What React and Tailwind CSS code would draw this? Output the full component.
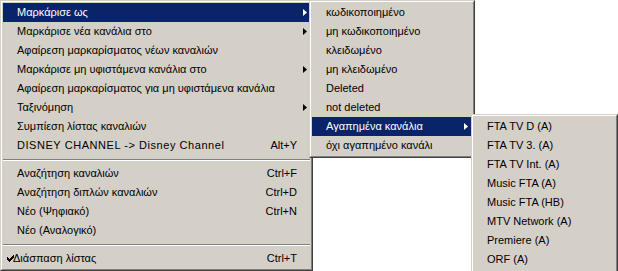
import React from "react";

const FONT = { fontFamily: '"Liberation Sans", Arial, sans-serif' };

function Arrow({ white }) {
  return (
    <svg width="4" height="7" viewBox="0 0 4 7" className="shrink-0">
      <polygon points="0,0 4,3.5 0,7" fill={white ? "#ffffff" : "#000000"} />
    </svg>
  );
}

function Check() {
  return (
    <svg width="7" height="7" viewBox="0 0 7 7" className="shrink-0" shapeRendering="crispEdges">
      <path
        d="M6 0h1v3h-1v1h-1v1h-1v1h-1v1h-1v-1h-1v-1h-1v-3h1v1h1v1h1v-1h1v-1h1z"
        fill="#000"
      />
    </svg>
  );
}

function Item({ t, sc, arrow, hl, check, wide, pl = "pl-[14px]", pr = "pr-[3px]" }) {
  return (
    <div
      className={`h-[19px] flex items-center ${pl} ${pr} whitespace-nowrap ${
        hl ? "bg-[#0a246a] text-white" : "text-black"
      }`}
    >
      {check ? (
        <div className="flex items-center -ml-[10px] mr-[-1px]">
          <Check />
        </div>
      ) : null}
      <span className={`grow ${wide ? "tracking-[0.55px]" : ""}`}>{t}</span>
      {sc ? <span className="mr-[6px]">{sc}</span> : null}
      {arrow ? <Arrow white={hl} /> : sc ? <span className="w-[4px]" /> : null}
    </div>
  );
}

function Sep() {
  return (
    <div className="h-[9px] flex items-center">
      <div className="w-full h-[2px] border-t border-t-[#808080] border-b border-b-white" />
    </div>
  );
}

function Frame({ className, children }) {
  return (
    <div
      className={`bg-[#d4d0c8] border border-t-[#d4d0c8] border-l-[#d4d0c8] border-r-[#404040] border-b-[#404040] ${className}`}
    >
      <div className="h-full border border-t-white border-l-white border-r-[#808080] border-b-[#808080] p-[1px]">
        {children}
      </div>
    </div>
  );
}

const main = [
  { t: "Μαρκάρισε ως", arrow: true, hl: true },
  { t: "Μαρκάρισε νέα κανάλια στο", arrow: true },
  { t: "Αφαίρεση μαρκαρίσματος νέων καναλιών" },
  { t: "Μαρκάρισε μη υφιστάμενα κανάλια στο", arrow: true },
  { t: "Αφαίρεση μαρκαρίσματος για μη υφιστάμενα κανάλια" },
  { t: "Ταξινόμηση", arrow: true },
  { t: "Συμπίεση λίστας καναλιών" },
  { t: "DISNEY CHANNEL -> Disney Channel", sc: "Alt+Y", wide: true },
  "sep",
  { t: "Αναζήτηση καναλιών", sc: "Ctrl+F" },
  { t: "Αναζήτηση διπλών καναλιών", sc: "Ctrl+D" },
  { t: "Νέο (Ψηφιακό)", sc: "Ctrl+N" },
  { t: "Νέο (Αναλογικό)" },
  "sep",
  { t: "Διάσπαση λίστας", sc: "Ctrl+T", check: true },
];

const sub1 = [
  { t: "κωδικοποιημένο" },
  { t: "μη κωδικοποιημένο" },
  { t: "κλειδωμένο" },
  { t: "μη κλειδωμένο" },
  { t: "Deleted" },
  { t: "not deleted" },
  { t: "Αγαπημένα κανάλια", arrow: true, hl: true },
  { t: "όχι αγαπημένο κανάλι" },
];

const sub2 = [
  "FTA TV D (A)",
  "FTA TV 3. (A)",
  "FTA TV Int. (A)",
  "Music FTA (A)",
  "Music FTA (HB)",
  "MTV Network (A)",
  "Premiere (A)",
  "ORF (A)",
];

export default function App() {
  return (
    <div className="relative w-[618px] h-[271px] bg-white overflow-hidden text-[11px] leading-none" style={FONT}>
      <Frame className="w-[313px] h-[271px]">
        {main.map((m, i) =>
          m === "sep" ? <Sep key={i} /> : <Item key={i} {...m} />
        )}
      </Frame>

      <Frame className="absolute left-[309px] top-0 w-[166px] h-[158px]">
        {sub1.map((m, i) => (
          <Item key={i} {...m} pr="pr-[4px]" />
        ))}
      </Frame>

      <Frame className="absolute left-[471px] top-[114px] w-[147px] h-[160px]">
        {sub2.map((t, i) => (
          <Item key={i} t={t} pl="pl-[13px]" />
        ))}
      </Frame>
    </div>
  );
}
